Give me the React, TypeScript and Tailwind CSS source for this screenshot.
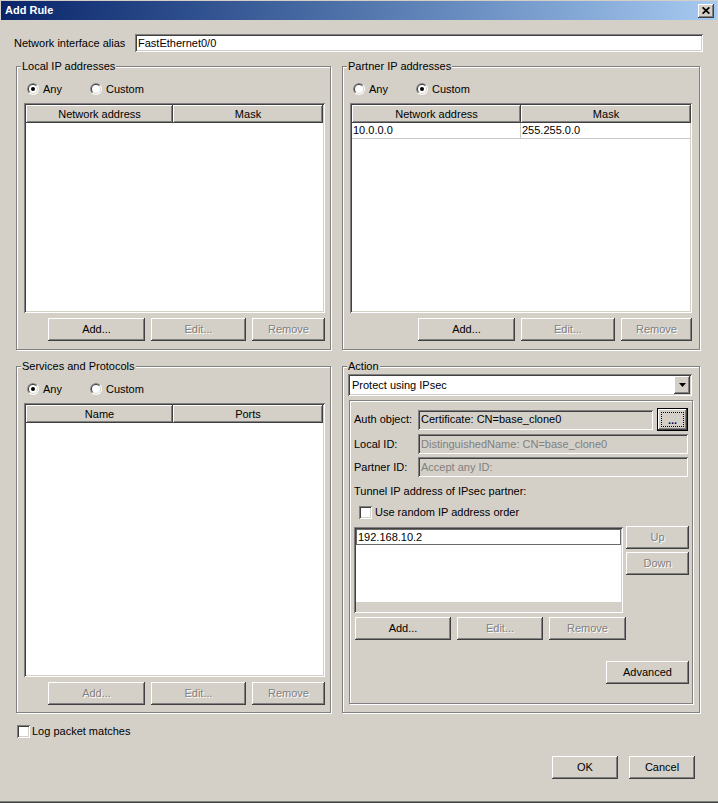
import React from "react";

const RAISED =
  "bg-[#d4d0c8] shadow-[inset_-1px_-1px_#404040,inset_1px_1px_#ffffff,inset_-2px_-2px_#808080,inset_2px_2px_#d4d0c8]";
const SUNKEN =
  "shadow-[inset_1px_1px_#808080,inset_-1px_-1px_#ffffff,inset_2px_2px_#404040,inset_-2px_-2px_#d4d0c8]";
const ETCHED =
  "border border-[#808080] shadow-[inset_1px_1px_#ffffff,1px_1px_#ffffff]";
const DIS = "text-[#808080] [text-shadow:1px_1px_0_#ffffff]";

function Btn({
  label,
  w,
  disabled = false,
}: {
  label: string;
  w: string;
  disabled?: boolean;
}) {
  return (
    <div
      className={`${RAISED} ${w} h-[23px] shrink-0 flex items-center justify-center ${
        disabled ? DIS : "text-black"
      }`}
    >
      {label}
    </div>
  );
}

function Radio({ checked }: { checked: boolean }) {
  return (
    <svg width="12" height="12" viewBox="0 0 12 12" className="shrink-0">
      <circle cx="6" cy="6" r="6" fill="#ffffff" />
      <path d="M1.757 10.243 A6 6 0 0 1 10.243 1.757 Z" fill="#808080" />
      <circle cx="6" cy="6" r="5" fill="#d4d0c8" />
      <path d="M2.464 9.536 A5 5 0 0 1 9.536 2.464 Z" fill="#404040" />
      <circle cx="6" cy="6" r="4" fill="#ffffff" />
      {checked && <circle cx="6" cy="6" r="2" fill="#000000" />}
    </svg>
  );
}

function Check() {
  return <div className={`${SUNKEN} w-[13px] h-[13px] bg-white shrink-0`} />;
}

function Group({
  title,
  className,
  children,
}: {
  title: string;
  className: string;
  children: React.ReactNode;
}) {
  return (
    <div className={`relative ${ETCHED} ${className} shrink-0 flex flex-col`}>
      <span className="absolute left-[4px] top-[-7px] bg-[#d4d0c8] px-[1px] leading-[13px]">
        {title}
      </span>
      {children}
    </div>
  );
}

function RadioRow({ any }: { any: boolean }) {
  return (
    <div className="ml-[3px] h-[12px] flex items-center">
      <div className="w-[63px] flex items-center gap-[4px]">
        <Radio checked={any} />
        <span>Any</span>
      </div>
      <div className="flex items-center gap-[4px]">
        <Radio checked={!any} />
        <span>Custom</span>
      </div>
    </div>
  );
}

function HeaderCell({ label, w }: { label: string; w: string }) {
  return (
    <div className={`${RAISED} ${w} h-[18px] flex items-center justify-center shrink-0`}>
      {label}
    </div>
  );
}

export default function App() {
  return (
    <div className="w-[718px] h-[803px] bg-[#d4d0c8] font-['Liberation_Sans',Arial,sans-serif] text-[11px] leading-[13px] text-black flex flex-col pt-[1px] px-[1px] shadow-[inset_0_-1px_#404040,inset_0_-2px_#808080] overflow-hidden select-none">
      {/* Title bar */}
      <div className="h-[19px] shrink-0 bg-linear-to-r from-[#0a246a] to-[#a6caf0] flex items-center justify-between pl-[4px] pr-[3px]">
        <span className="font-bold text-white">Add Rule</span>
        <div className={`${RAISED} w-[16px] h-[14px] flex items-center justify-center`}>
          <svg width="8" height="7" viewBox="0 0 8 7">
            <path
              d="M0.6 0.3 L7.4 6.7 M7.4 0.3 L0.6 6.7"
              stroke="#000000"
              strokeWidth="1.7"
            />
          </svg>
        </div>
      </div>

      {/* Alias row */}
      <div className="mt-[14px] pl-[13px] flex items-center">
        <span className="w-[121px] shrink-0">Network interface alias</span>
        <div className={`${SUNKEN} bg-white w-[568px] h-[18px] flex items-center pl-[3px]`}>
          FastEthernet0/0
        </div>
      </div>

      {/* Top groups */}
      <div className="mt-[14px] pl-[15px] flex gap-[11px]">
        <Group title="Local IP addresses" className="w-[315px] h-[284px] pt-[16px] pl-[7px]">
          <RadioRow any={true} />
          <div className={`${SUNKEN} bg-white mt-[8px] w-[301px] h-[210px] p-[2px] flex flex-col`}>
            <div className="flex">
              <HeaderCell label="Network address" w="w-[147px]" />
              <HeaderCell label="Mask" w="w-[150px]" />
            </div>
          </div>
          <div className="mt-[5px] w-[301px] flex justify-end gap-[6px]">
            <Btn label="Add..." w="w-[97px]" />
            <Btn label="Edit..." w="w-[95px]" disabled />
            <Btn label="Remove" w="w-[73px]" disabled />
          </div>
        </Group>

        <Group title="Partner IP addresses" className="w-[358px] h-[284px] pt-[16px] pl-[7px]">
          <RadioRow any={false} />
          <div className={`${SUNKEN} bg-white mt-[8px] w-[342px] h-[210px] p-[2px] flex flex-col`}>
            <div className="flex">
              <HeaderCell label="Network address" w="w-[169px]" />
              <HeaderCell label="Mask" w="w-[170px]" />
            </div>
            <div className="flex h-[16px] w-[339px]">
              <div className="w-[169px] border-r border-b border-[#c8c8c8] pl-[1px] flex items-center">
                10.0.0.0
              </div>
              <div className="w-[170px] border-b border-[#c8c8c8] pl-[1px] flex items-center">
                255.255.0.0
              </div>
            </div>
          </div>
          <div className="mt-[5px] w-[342px] flex justify-end gap-[6px]">
            <Btn label="Add..." w="w-[97px]" />
            <Btn label="Edit..." w="w-[94px]" disabled />
            <Btn label="Remove" w="w-[71px]" disabled />
          </div>
        </Group>
      </div>

      {/* Bottom groups */}
      <div className="mt-[16px] pl-[15px] flex gap-[11px]">
        <Group title="Services and Protocols" className="w-[315px] h-[347px] pt-[16px] pl-[7px]">
          <RadioRow any={true} />
          <div className={`${SUNKEN} bg-white mt-[8px] w-[301px] h-[274px] p-[2px] flex flex-col`}>
            <div className="flex">
              <HeaderCell label="Name" w="w-[147px]" />
              <HeaderCell label="Ports" w="w-[150px]" />
            </div>
          </div>
          <div className="mt-[5px] w-[301px] flex justify-end gap-[6px]">
            <Btn label="Add..." w="w-[97px]" disabled />
            <Btn label="Edit..." w="w-[95px]" disabled />
            <Btn label="Remove" w="w-[73px]" disabled />
          </div>
        </Group>

        <Group title="Action" className="w-[358px] h-[347px] pt-[7px] pl-[5px]">
          {/* Combo box */}
          <div className={`${SUNKEN} bg-white w-[344px] h-[22px] p-[2px] flex`}>
            <div className="flex-1 flex items-center pl-[2px]">Protect using IPsec</div>
            <div className={`${RAISED} w-[16px] h-[18px] flex items-center justify-center`}>
              <svg width="7" height="4" viewBox="0 0 7 4">
                <polygon points="0,0 7,0 3.5,4" fill="#000000" />
              </svg>
            </div>
          </div>

          {/* Inner etched box */}
          <div className={`${ETCHED} mt-[4px] ml-[1px] w-[344px] h-[304px] pt-[7px] pl-[4px] flex flex-col`}>
            <div className="h-[23px] flex items-center">
              <span className="w-[64px] shrink-0">Auth object:</span>
              <div className={`${SUNKEN} bg-[#d4d0c8] w-[235px] h-[20px] flex items-center pl-[3px]`}>
                Certificate: CN=base_clone0
              </div>
              <div className="ml-[4px] w-[31px] h-[23px] border border-black flex shrink-0">
                <div className={`${RAISED} flex-1 p-[3px] flex`}>
                  <div className="flex-1 border border-dotted border-black flex items-end justify-center leading-[11px] font-bold text-[#000060]">
                    ...
                  </div>
                </div>
              </div>
            </div>
            <div className="mt-[3px] h-[20px] flex items-center">
              <span className="w-[64px] shrink-0">Local ID:</span>
              <div className={`${SUNKEN} bg-[#d4d0c8] w-[270px] h-[20px] flex items-center pl-[3px] text-[#808080]`}>
                DistinguishedName: CN=base_clone0
              </div>
            </div>
            <div className="mt-[3px] h-[20px] flex items-center">
              <span className="w-[64px] shrink-0">Partner ID:</span>
              <div className={`${SUNKEN} bg-[#d4d0c8] w-[270px] h-[20px] flex items-center pl-[3px] text-[#808080]`}>
                Accept any ID:
              </div>
            </div>
            <div className="mt-[8px] h-[13px]">Tunnel IP address of IPsec partner:</div>
            <div className="mt-[8px] ml-[5px] h-[13px] flex items-center gap-[3px]">
              <Check />
              <span>Use random IP address order</span>
            </div>
            <div className="mt-[8px] flex items-start">
              <div className={`${SUNKEN} bg-white w-[269px] h-[86px] p-[2px] flex flex-col`}>
                <div className="h-[16px] border border-[#6a6a6a] bg-white pl-[1px] flex items-center">
                  192.168.10.2
                </div>
                <div className="mt-auto h-[9px] bg-[#d4d0c8]" />
              </div>
              <div className="ml-[3px] mt-[-1px] flex flex-col gap-[3px]">
                <Btn label="Up" w="w-[63px]" disabled />
                <Btn label="Down" w="w-[63px]" disabled />
              </div>
            </div>
            <div className="mt-[4px] ml-[1px] flex gap-[6px]">
              <Btn label="Add..." w="w-[96px]" />
              <Btn label="Edit..." w="w-[86px]" disabled />
              <Btn label="Remove" w="w-[77px]" disabled />
            </div>
            <div className="mt-[21px] ml-[252px] flex">
              <Btn label="Advanced" w="w-[83px]" />
            </div>
          </div>
        </Group>
      </div>

      {/* Log packet matches */}
      <div className="mt-[12px] pl-[16px] h-[13px] flex items-center gap-[2px]">
        <Check />
        <span>Log packet matches</span>
      </div>

      {/* OK / Cancel */}
      <div className="mt-[18px] pr-[22px] flex justify-end gap-[11px]">
        <Btn label="OK" w="w-[66px]" />
        <Btn label="Cancel" w="w-[66px]" />
      </div>
    </div>
  );
}
